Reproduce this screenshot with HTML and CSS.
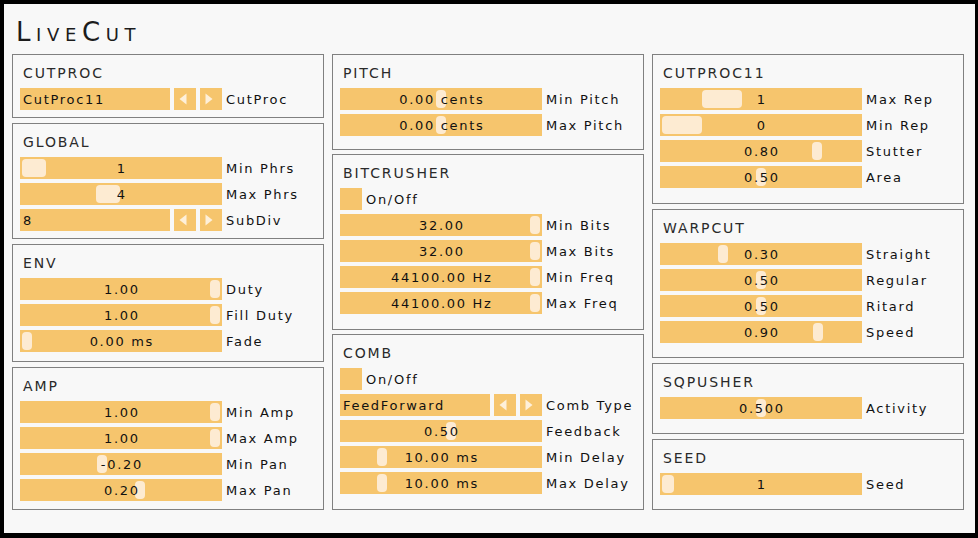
FILE: index.html
```html
<!DOCTYPE html>
<html>
<head>
<meta charset="utf-8">
<title>LiveCut</title>
<link rel="stylesheet" href="styles.css">
</head>
<body>
<div class="panel">
  <div class="header"><span class="logo">LiveCut</span></div>
  <div class="columns">
    <div class="col col-left">
      <div class="box h-cutproc">
        <div class="box-title">CUTPROC</div>
        <div class="rows">
          <div class="row">
            <div class="combo">CutProc11</div>
            <div class="arrow"><svg viewBox="0 0 22 22" width="22" height="22"><polygon points="5.5,11 12.5,5.5 12.5,16.5" /></svg></div>
            <div class="arrow"><svg viewBox="0 0 22 22" width="22" height="22"><polygon points="5.5,5.5 12.5,11 5.5,16.5" /></svg></div>
            <div class="label">CutProc</div>
          </div>
        </div>
      </div>
      <div class="box h-global">
        <div class="box-title">GLOBAL</div>
        <div class="rows">
          <div class="row"><div class="slider"><span class="thumb" style="left:2px;width:24px"></span><span class="val">1</span></div><div class="label">Min Phrs</div></div>
          <div class="row"><div class="slider"><span class="thumb" style="left:76px;width:24px"></span><span class="val">4</span></div><div class="label">Max Phrs</div></div>
          <div class="row">
            <div class="combo">8</div>
            <div class="arrow"><svg viewBox="0 0 22 22" width="22" height="22"><polygon points="5.5,11 12.5,5.5 12.5,16.5" /></svg></div>
            <div class="arrow"><svg viewBox="0 0 22 22" width="22" height="22"><polygon points="5.5,5.5 12.5,11 5.5,16.5" /></svg></div>
            <div class="label">SubDiv</div>
          </div>
        </div>
      </div>
      <div class="box h-env">
        <div class="box-title">ENV</div>
        <div class="rows">
          <div class="row"><div class="slider"><span class="thumb" style="left:190px"></span><span class="val">1.00</span></div><div class="label">Duty</div></div>
          <div class="row"><div class="slider"><span class="thumb" style="left:190px"></span><span class="val">1.00</span></div><div class="label">Fill Duty</div></div>
          <div class="row"><div class="slider"><span class="thumb" style="left:2px"></span><span class="val">0.00 ms</span></div><div class="label">Fade</div></div>
        </div>
      </div>
      <div class="box h-amp">
        <div class="box-title">AMP</div>
        <div class="rows">
          <div class="row"><div class="slider"><span class="thumb" style="left:190px"></span><span class="val">1.00</span></div><div class="label">Min Amp</div></div>
          <div class="row"><div class="slider"><span class="thumb" style="left:190px"></span><span class="val">1.00</span></div><div class="label">Max Amp</div></div>
          <div class="row"><div class="slider"><span class="thumb" style="left:77px"></span><span class="val">-0.20</span></div><div class="label">Min Pan</div></div>
          <div class="row"><div class="slider"><span class="thumb" style="left:115px"></span><span class="val">0.20</span></div><div class="label">Max Pan</div></div>
        </div>
      </div>
    </div>

    <div class="col col-mid">
      <div class="box h-pitch">
        <div class="box-title">PITCH</div>
        <div class="rows">
          <div class="row"><div class="slider"><span class="thumb" style="left:96px"></span><span class="val">0.00 cents</span></div><div class="label">Min Pitch</div></div>
          <div class="row"><div class="slider"><span class="thumb" style="left:96px"></span><span class="val">0.00 cents</span></div><div class="label">Max Pitch</div></div>
        </div>
      </div>
      <div class="box h-bit">
        <div class="box-title">BITCRUSHER</div>
        <div class="rows">
          <div class="row"><div class="toggle"></div><div class="label">On/Off</div></div>
          <div class="row"><div class="slider"><span class="thumb" style="left:190px"></span><span class="val">32.00</span></div><div class="label">Min Bits</div></div>
          <div class="row"><div class="slider"><span class="thumb" style="left:190px"></span><span class="val">32.00</span></div><div class="label">Max Bits</div></div>
          <div class="row"><div class="slider"><span class="thumb" style="left:190px"></span><span class="val">44100.00 Hz</span></div><div class="label">Min Freq</div></div>
          <div class="row"><div class="slider"><span class="thumb" style="left:190px"></span><span class="val">44100.00 Hz</span></div><div class="label">Max Freq</div></div>
        </div>
      </div>
      <div class="box h-comb">
        <div class="box-title">COMB</div>
        <div class="rows">
          <div class="row"><div class="toggle"></div><div class="label">On/Off</div></div>
          <div class="row">
            <div class="combo">FeedForward</div>
            <div class="arrow"><svg viewBox="0 0 22 22" width="22" height="22"><polygon points="5.5,11 12.5,5.5 12.5,16.5" /></svg></div>
            <div class="arrow"><svg viewBox="0 0 22 22" width="22" height="22"><polygon points="5.5,5.5 12.5,11 5.5,16.5" /></svg></div>
            <div class="label">Comb Type</div>
          </div>
          <div class="row"><div class="slider"><span class="thumb" style="left:106px"></span><span class="val">0.50</span></div><div class="label">Feedback</div></div>
          <div class="row"><div class="slider"><span class="thumb" style="left:37px"></span><span class="val">10.00 ms</span></div><div class="label">Min Delay</div></div>
          <div class="row"><div class="slider"><span class="thumb" style="left:37px"></span><span class="val">10.00 ms</span></div><div class="label">Max Delay</div></div>
        </div>
      </div>
    </div>

    <div class="col col-right">
      <div class="box h-cp11">
        <div class="box-title">CUTPROC11</div>
        <div class="rows">
          <div class="row"><div class="slider"><span class="thumb" style="left:42px;width:40px"></span><span class="val">1</span></div><div class="label">Max Rep</div></div>
          <div class="row"><div class="slider"><span class="thumb" style="left:2px;width:40px"></span><span class="val">0</span></div><div class="label">Min Rep</div></div>
          <div class="row"><div class="slider"><span class="thumb" style="left:152px"></span><span class="val">0.80</span></div><div class="label">Stutter</div></div>
          <div class="row"><div class="slider"><span class="thumb" style="left:96px"></span><span class="val">0.50</span></div><div class="label">Area</div></div>
        </div>
      </div>
      <div class="box h-warp">
        <div class="box-title">WARPCUT</div>
        <div class="rows">
          <div class="row"><div class="slider"><span class="thumb" style="left:58px"></span><span class="val">0.30</span></div><div class="label">Straight</div></div>
          <div class="row"><div class="slider"><span class="thumb" style="left:96px"></span><span class="val">0.50</span></div><div class="label">Regular</div></div>
          <div class="row"><div class="slider"><span class="thumb" style="left:96px"></span><span class="val">0.50</span></div><div class="label">Ritard</div></div>
          <div class="row"><div class="slider"><span class="thumb" style="left:153px"></span><span class="val">0.90</span></div><div class="label">Speed</div></div>
        </div>
      </div>
      <div class="box h-sq">
        <div class="box-title">SQPUSHER</div>
        <div class="rows">
          <div class="row"><div class="slider"><span class="thumb" style="left:96px"></span><span class="val">0.500</span></div><div class="label">Activity</div></div>
        </div>
      </div>
      <div class="box h-seed">
        <div class="box-title">SEED</div>
        <div class="rows">
          <div class="row"><div class="slider"><span class="thumb" style="left:2px;width:12px"></span><span class="val">1</span></div><div class="label">Seed</div></div>
        </div>
      </div>
    </div>
  </div>
</div>
</body>
</html>
```

FILE: styles.css
```css
html, body {
  margin: 0;
  padding: 0;
  background: #000;
}

body {
  font-family: "DejaVu Sans", "Verdana", sans-serif;
  color: #111;
}

.panel {
  margin: 4px 0 0 4px;
  width: 971px;
  height: 529px;
  background: #f8f8f8;
  box-sizing: border-box;
  padding-left: 8px;
}

.header {
  height: 50px;
  box-sizing: border-box;
  padding-top: 13px;
  padding-left: 4px;
}

.logo {
  font-size: 26px;
  line-height: 30px;
  font-variant: small-caps;
  letter-spacing: 5.6px;
  color: #1c1c1c;
  display: block;
}

.columns {
  display: flex;
  gap: 8px;
}

.col {
  width: 312px;
  display: flex;
  flex-direction: column;
}

.col-left { gap: 5px; }
.col-mid { gap: 4px; }
.col-right { gap: 5px; }

.box {
  border: 1px solid #808080;
  box-sizing: border-box;
  padding: 0 7px;
}

.h-cutproc { height: 64px; }
.h-global { height: 116px; }
.h-env { height: 118px; }
.h-amp { height: 143px; }
.h-pitch { height: 96px; }
.h-bit { height: 176px; }
.h-comb { height: 176px; }
.h-cp11 { height: 150px; }
.h-warp { height: 149px; }
.h-sq { height: 71px; }
.h-seed { height: 71px; }

.box-title {
  height: 33px;
  box-sizing: border-box;
  padding-top: 10px;
  padding-left: 3px;
  font-size: 14px;
  line-height: 16px;
  letter-spacing: 1.9px;
  color: #2a2a2a;
}

.rows {
  display: flex;
  flex-direction: column;
  gap: 4px;
}

.row {
  display: flex;
  height: 22px;
  font-size: 13px;
  line-height: 24px;
  letter-spacing: 1.7px;
}

.slider {
  position: relative;
  width: 202px;
  height: 22px;
  background: #f6c56d;
  text-align: center;
}

.thumb {
  position: absolute;
  top: 2px;
  width: 10px;
  height: 18px;
  border-radius: 4px;
  background: #fdebd2;
}

.val {
  position: relative;
  padding-left: 1.7px;
  white-space: nowrap;
}

.combo {
  width: 150px;
  height: 22px;
  background: #f6c56d;
  box-sizing: border-box;
  padding-left: 3px;
  white-space: nowrap;
}

.arrow {
  width: 22px;
  height: 22px;
  margin-left: 4px;
  background: #f6c56d;
}

.arrow svg {
  display: block;
  fill: #fef0da;
}

.toggle {
  width: 22px;
  height: 22px;
  background: #f6c56d;
}

.label {
  margin-left: 4px;
  white-space: nowrap;
}
```
